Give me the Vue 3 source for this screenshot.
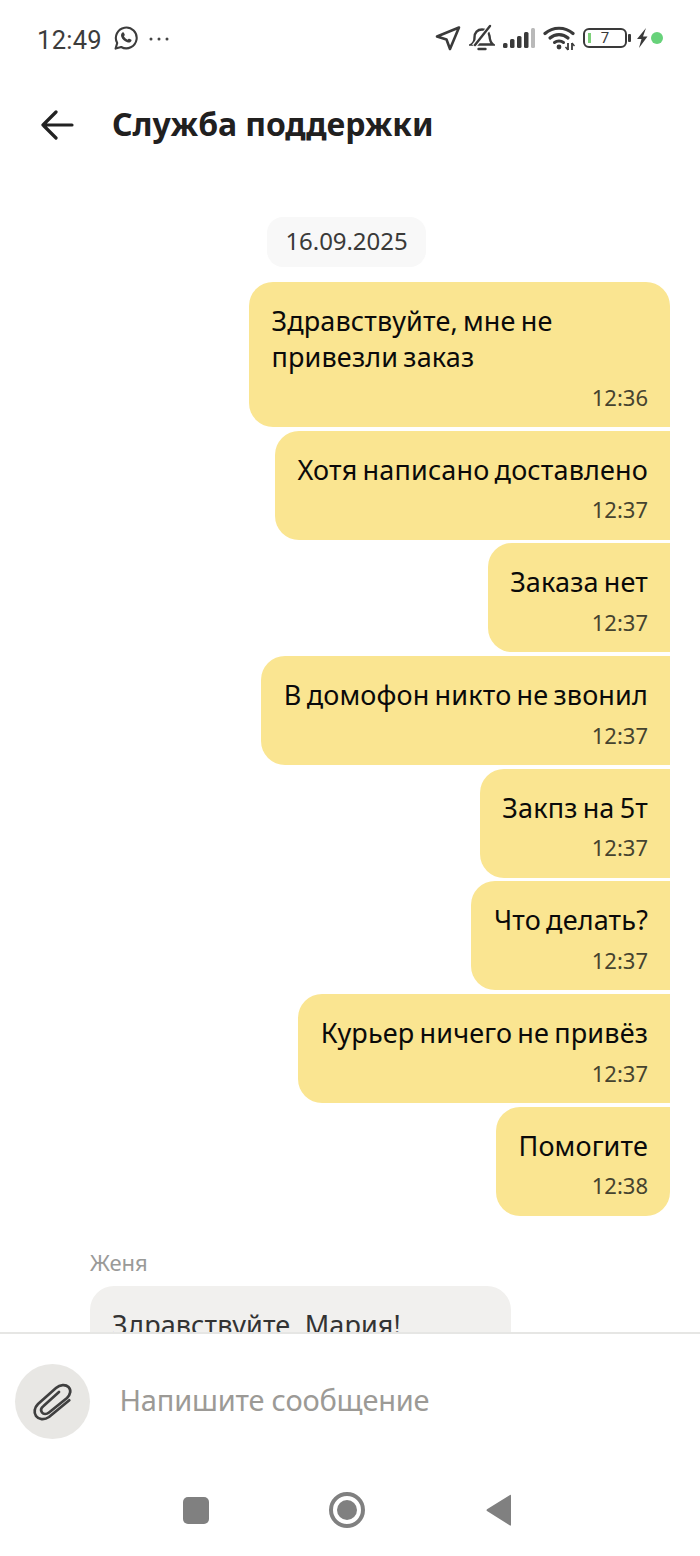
<template>
  <div class="screen">
    <div class="status">
      <div class="status-left">
        <span class="clock">12:49</span>
        <svg class="wa" width="24" height="24" viewBox="0 0 24 24" fill="none">
          <path d="M1.6 22.600l1.600-5.600A10.400 10.400 0 1 1 7.200 21z" stroke="#3c3c3c" stroke-width="2.100" stroke-linejoin="round"/>
          <path d="M8.200 6.800c.9-.8 1.500-.5 1.800.2l.7 1.500c.2.500 0 .9-.8 1.800.8 1.500 2 2.700 3.700 3.500.8-1 1.200-1.200 1.700-1l1.700.8c.6.3.7.9.2 1.700-.8 1.200-2.300 1.500-4 .9-3-1-5.100-3-6-5.700-.4-1.300-.1-2.600 1-3.700z" fill="#3c3c3c"/>
        </svg>
        <svg class="dots" width="22" height="6" viewBox="0 0 22 6"><circle cx="3" cy="3" r="1.500" fill="#444"/><circle cx="11" cy="3" r="1.500" fill="#444"/><circle cx="19" cy="3" r="1.500" fill="#444"/></svg>
      </div>
      <div class="status-right">
        <svg width="26" height="26" viewBox="0 0 26 26" fill="none"><path d="M24 2.500L2 11.500l9.500 3 3.500 9.500z" stroke="#3a3a3a" stroke-width="2.600" stroke-linejoin="round"/></svg>
        <svg width="26" height="28" viewBox="0 0 26 28" fill="none">
          <path d="M2.500 20.500c2.500-1.500 3-3.500 3-7 0-5 3-8 7.500-8s7 2.500 7.500 6.500c.3 3.500.5 6.500 3.500 8.500z" stroke="#3a3a3a" stroke-width="2.400"/>
          <path d="M9.500 25h7" stroke="#3a3a3a" stroke-width="2.400" stroke-linecap="round"/>
          <path d="M22 1.500L5 22" stroke="#fff" stroke-width="5"/>
          <path d="M21 2L6 21" stroke="#3a3a3a" stroke-width="2.400" stroke-linecap="round"/>
        </svg>
        <svg width="32" height="22" viewBox="0 0 32 22"><rect x="0" y="16" width="4.500" height="5" rx="1.500" fill="#3a3a3a"/><rect x="7" y="12" width="4.500" height="9" rx="1.500" fill="#3a3a3a"/><rect x="14" y="9" width="4.500" height="12" rx="1.500" fill="#3a3a3a"/><rect x="21" y="5" width="4.500" height="16" rx="1.500" fill="#3a3a3a"/><rect x="28" y="1" width="4" height="20" rx="1.500" fill="#b9b9b9"/></svg>
        <svg width="32" height="26" viewBox="0 0 32 26" fill="none">
          <path d="M2 8.500c8-7 20-7 28 0" stroke="#3a3a3a" stroke-width="3.200" stroke-linecap="round"/>
          <path d="M7 13c5-4.500 13-4.500 18 0" stroke="#3a3a3a" stroke-width="3.200" stroke-linecap="round"/>
          <path d="M11.500 17.500c2.500-2 6.500-2 9 0" stroke="#3a3a3a" stroke-width="3" stroke-linecap="round"/>
          <circle cx="16" cy="22" r="2.400" fill="#3a3a3a"/>
          <path d="M25 18v7M29 18v7" stroke="#3a3a3a" stroke-width="1.800"/>
          <path d="M22.500 22l2.500 3M31.500 21l-2.500-3" stroke="#3a3a3a" stroke-width="1.400"/>
        </svg>
        <div class="battery">
          <div class="cell">
            <i class="level"></i>
            <span>7</span>
          </div>
          <b class="nub"></b>
        </div>
        <svg class="bolt" width="12" height="22" viewBox="0 0 12 22"><path d="M10 1L1 12h4.500L3 21 11.500 9.500H7z" fill="#3a3a3a"/></svg>
        <i class="dot"></i>
      </div>
    </div>

    <div class="header">
      <svg width="34" height="30" viewBox="0 0 34 30" fill="none"><path d="M16 2L3 15l13 13M3 15h29" stroke="#222" stroke-width="3.200" stroke-linecap="round" stroke-linejoin="round"/></svg>
      <h1>Служба поддержки</h1>
    </div>

    <div class="chat">
      <div class="date"><span>16.09.2025</span></div>
      <div class="mine">
        <div v-for="m in messages" :key="m.text" class="bubble">
          <p>{{ m.text }}</p>
          <time>{{ m.time }}</time>
        </div>
      </div>
      <div class="reply">
        <div class="author">Женя</div>
        <div class="bubble-in">Здравствуйте, Мария!</div>
      </div>
    </div>

    <div class="composer">
      <div class="attach">
        <svg width="46" height="46" viewBox="0 0 46 46" fill="none">
          <path d="M39.300 21.300L19 38C14 41.500 8.500 40.500 6 37 3.500 33.500 4.500 28.500 8 25L26 9C30 5.500 35.500 5 38.500 8 41.500 11 40.500 15.500 37 19L19 33.500C16.500 35.500 13.500 35.500 12 33.500 10.500 31.500 11 29 13.500 27L29 13" stroke="#3f3f3f" stroke-width="2.700" stroke-linecap="round" stroke-linejoin="round"/>
        </svg>
      </div>
      <span class="placeholder">Напишите сообщение</span>
    </div>

    <div class="navbar">
      <i class="nav-square"></i>
      <i class="nav-circle"><i></i></i>
      <svg width="26" height="32" viewBox="0 0 26 32"><path d="M25 1.500v29.500c0 .6-.6.9-1 .6L1 17c-.6-.4-.6-1.300 0-1.700L24 .9c.4-.3 1 0 1 .6z" fill="#808080"/></svg>
    </div>
  </div>
</template>

<script setup>
const messages = [
  { text: 'Здравствуйте, мне не привезли заказ', time: '12:36' },
  { text: 'Хотя написано доставлено', time: '12:37' },
  { text: 'Заказа нет', time: '12:37' },
  { text: 'В домофон никто не звонил', time: '12:37' },
  { text: 'Закпз на 5т', time: '12:37' },
  { text: 'Что делать?', time: '12:37' },
  { text: 'Курьер ничего не привёз', time: '12:37' },
  { text: 'Помогите', time: '12:38' }
]
</script>

<style>
body {
  margin: 0;
  background: #fff;
}
</style>

<style scoped>
.screen {
  width: 700px;
  height: 1556px;
  display: flex;
  flex-direction: column;
  overflow: hidden;
  background: #fff;
  font-family: "Noto Sans", "Open Sans", sans-serif;
  color: #111;
}

.status {
  height: 76px;
  flex: none;
  display: flex;
  align-items: center;
  justify-content: space-between;
  padding: 0 37px;
}

.status-left,
.status-right {
  display: flex;
  align-items: center;
}

.clock {
  font-family: Roboto, sans-serif;
  font-size: 25.500px;
  margin-top: 3px;
  color: #3c3c3c;
  letter-spacing: 0.3px;
}

.wa {
  margin-left: 12px;
}

.dots {
  margin-left: 10px;
  margin-top: 2px;
}

.status-right {
  gap: 8px;
}

.battery {
  display: flex;
  align-items: center;
  gap: 1px;
}

.cell {
  width: 40px;
  height: 16px;
  border: 2px solid #3a3a3a;
  border-radius: 6px;
  display: flex;
  align-items: center;
  justify-content: center;
  position: relative;
  font-family: Roboto, sans-serif;
  font-size: 15px;
  color: #3a3a3a;
}

.level {
  position: absolute;
  left: 3px;
  top: 3px;
  bottom: 3px;
  width: 3px;
  background: #7ed07a;
}

.nub {
  width: 3px;
  height: 8px;
  background: #3a3a3a;
  border-radius: 1px;
}

.bolt {
  margin-left: -3px;
}

.dot {
  width: 12px;
  height: 12px;
  border-radius: 50%;
  background: #67d27a;
  margin-left: -5px;
}

.header {
  height: 98px;
  flex: none;
  display: flex;
  align-items: center;
  padding-left: 40px;
  gap: 38px;
}

h1 {
  margin: -4px 0 0;
  font-size: 32px;
  font-weight: 700;
  color: #21201f;
  letter-spacing: -0.1px;
}

.chat {
  height: 1158px;
  flex: none;
  overflow: hidden;
}

.date {
  display: flex;
  justify-content: center;
  padding-top: 43px;
  margin-left: -7px;
}

.date span {
  height: 50px;
  line-height: 47px;
  padding: 0 18.500px;
  border-radius: 16px;
  background: #f8f8f8;
  font-size: 24px;
  letter-spacing: -0.05px;
  color: #3a3a38;
}

.mine {
  margin-top: 15px;
  padding-right: 30px;
  display: flex;
  flex-direction: column;
  align-items: flex-end;
  gap: 3.700px;
}

.bubble {
  max-width: 421px;
  padding: 21px 22px 0 22.500px;
  background: #fae591;
  border-radius: 24px 0 0 24px;
  box-sizing: border-box;
  min-height: 109px;
}

.bubble:first-child {
  border-radius: 24px 24px 0 24px;
  height: 145px;
}

.bubble:last-child {
  border-radius: 24px 0 24px 24px;
}

.bubble p {
  margin: 0;
  font-size: 27px;
  line-height: 36px;
  letter-spacing: 0.15px;
  word-spacing: -2px;
  color: #0a0a0a;
}

.bubble time {
  display: block;
  margin-top: 7.500px;
  text-align: right;
  font-size: 22px;
  line-height: 28px;
  color: #45432f;
}

.reply {
  margin: 32px 0 0 90px;
}

.author {
  font-size: 22px;
  line-height: 28px;
  color: #9a9a98;
}

.bubble-in {
  margin-top: 10px;
  width: 421px;
  height: 120px;
  box-sizing: border-box;
  padding: 21px 22px;
  background: #f1f0ee;
  border-radius: 24px;
  font-size: 27px;
  line-height: 36px;
  letter-spacing: 0.1px;
  color: #333;
}

.composer {
  flex: 0 0 auto;
  height: 137px;
  box-sizing: border-box;
  border-top: 2px solid #e6e6e4;
  display: flex;
  align-items: flex-start;
  padding: 30px 0 0 15px;
  gap: 29.500px;
  background: #fff;
}

.attach {
  width: 75px;
  height: 75px;
  border-radius: 50%;
  background: #e8e7e4;
  display: flex;
  align-items: center;
  justify-content: center;
}

.placeholder {
  font-size: 29px;
  line-height: 71px;
  letter-spacing: -0.2px;
  color: #9c9a96;
}

.navbar {
  flex: 1;
  display: flex;
  align-items: center;
  padding: 0 0 5px 183px;
}

.nav-square {
  width: 26px;
  height: 27px;
  border-radius: 5px;
  background: #808080;
}

.nav-circle {
  width: 36px;
  height: 36px;
  margin-left: 120px;
  box-sizing: border-box;
  border: 4px solid #808080;
  border-radius: 50%;
  display: flex;
  align-items: center;
  justify-content: center;
}

.nav-circle i {
  width: 20px;
  height: 20px;
  border-radius: 50%;
  background: #808080;
}

.navbar svg {
  margin-left: 121px;
}
</style>
